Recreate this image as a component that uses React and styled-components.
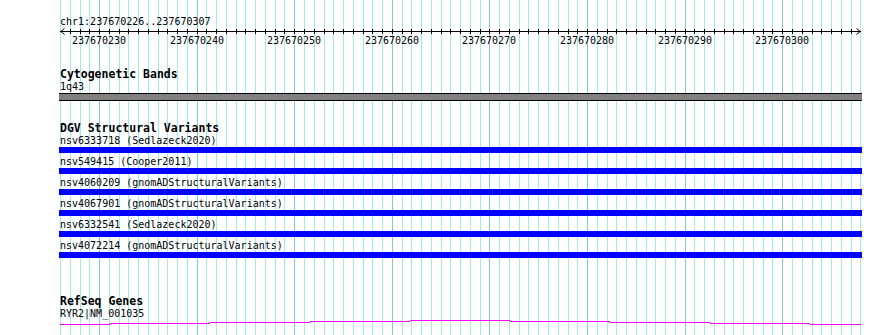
import React from 'react';
import styled, { createGlobalStyle } from 'styled-components';

const START = 237670226;
const END = 237670307;
const LEFT = 60;
const BP = 9.76;
const BASES = END - START + 1;

const xAt = (k) => Math.round(LEFT + k * BP);

const variants = [
  'nsv6333718 (Sedlazeck2020)',
  'nsv549415 (Cooper2011)',
  'nsv4060209 (gnomADStructuralVariants)',
  'nsv4067901 (gnomADStructuralVariants)',
  'nsv6332541 (Sedlazeck2020)',
  'nsv4072214 (gnomADStructuralVariants)',
];

// gene line segments: [x1, x2, y] (y relative to the gene svg)
const geneSegments = [
  [60, 110, 4],
  [110, 210, 3],
  [210, 310, 2],
  [310, 410, 1],
  [410, 510, 0],
  [510, 610, 1],
  [610, 710, 2],
  [710, 810, 3],
  [810, 861, 4],
];

const GlobalStyle = createGlobalStyle`
  body {
    margin: 0;
    background: #ffffff;
  }
`;

const Page = styled.div`
  position: relative;
  width: 890px;
  height: 335px;
  overflow: hidden;
  background: #ffffff;
  color: #000000;
  font-family: "DejaVu Sans Mono", monospace;
`;

const GridLayer = styled.svg`
  position: absolute;
  top: 0;
  left: 0;
  z-index: 0;
`;

const Content = styled.div`
  position: relative;
  z-index: 1;
  display: flex;
  flex-direction: column;
`;

const ChrLabel = styled.div`
  padding-top: 16px;
  margin-left: ${LEFT}px;
  font-size: 10px;
  line-height: 12px;
  height: 12px;
  white-space: pre;
`;

const Drawing = styled.svg`
  display: block;
  flex: none;
`;

const Track = styled.section`
  display: flex;
  flex-direction: column;
  margin-top: ${(p) => p.$top}px;
`;

const TrackTitle = styled.div`
  margin-left: ${LEFT}px;
  font-size: 11.5px;
  font-weight: bold;
  line-height: 14px;
  height: 14px;
  white-space: pre;
`;

const FeatureLabel = styled.div`
  margin-left: ${LEFT}px;
  font-size: 10px;
  line-height: 12px;
  height: 12px;
  white-space: pre;
`;

const BandBar = styled.div`
  margin-left: ${LEFT - 1}px;
  width: 803px;
  height: 6px;
  background: #808080;
  border-top: 1px solid #000000;
  border-bottom: 1px solid #000000;
`;

const VariantList = styled.div`
  display: flex;
  flex-direction: column;
  gap: 3px;
`;

const VariantRow = styled.div`
  display: flex;
  flex-direction: column;
`;

const VariantBar = styled.div`
  margin-left: ${LEFT - 1}px;
  width: 803px;
  height: 6px;
  background: #0000ff;
`;

const Grid = () => {
  const lines = [];
  for (let k = 0; k <= BASES; k++) {
    const major = (START + k) % 10 === 0;
    lines.push(
      <line
        key={k}
        x1={xAt(k) + 0.5}
        x2={xAt(k) + 0.5}
        y1={0}
        y2={335}
        stroke={major ? '#86c6ea' : '#a6e8ef'}
        strokeWidth={1}
      />
    );
  }
  return (
    <GridLayer width="890" height="335" shapeRendering="crispEdges">
      {lines}
    </GridLayer>
  );
};

const Ruler = () => {
  const right = xAt(BASES);
  const ticks = [];
  const labels = [];
  for (let k = 1; k < BASES; k++) {
    const x = xAt(k) + 0.5;
    ticks.push(<line key={k} x1={x} x2={x} y1={1} y2={6} stroke="#000" />);
    if ((START + k) % 10 === 0) {
      labels.push(
        <text
          key={k}
          x={xAt(k)}
          y={16}
          textAnchor="middle"
          fontFamily='"DejaVu Sans Mono", monospace'
          fontSize="10"
          fill="#000"
        >
          {START + k}
        </text>
      );
    }
  }
  return (
    <>
      <ChrLabel>chr1:{START}..{END}</ChrLabel>
      <Drawing width="890" height="22">
        <g shapeRendering="crispEdges">
          <line x1={LEFT} x2={right + 1} y1={3.5} y2={3.5} stroke="#000" />
          {ticks}
        </g>
        <polyline
          points={`${LEFT + 4.5},0.5 ${LEFT + 0.8},3.5 ${LEFT + 4.5},6.5`}
          fill="none"
          stroke="#000"
        />
        <polyline
          points={`${right - 3.5},0.5 ${right + 0.2},3.5 ${right - 3.5},6.5`}
          fill="none"
          stroke="#000"
        />
        {labels}
      </Drawing>
    </>
  );
};

const App = () => {
  return (
    <Page>
      <GlobalStyle />
      <Grid />
      <Content>
        <Ruler />

        <Track $top={17}>
          <TrackTitle>Cytogenetic Bands</TrackTitle>
          <FeatureLabel>1q43</FeatureLabel>
          <BandBar />
        </Track>

        <Track $top={20}>
          <TrackTitle>DGV Structural Variants</TrackTitle>
          <VariantList>
            {variants.map((v) => (
              <VariantRow key={v}>
                <FeatureLabel>{v}</FeatureLabel>
                <VariantBar />
              </VariantRow>
            ))}
          </VariantList>
        </Track>

        <Track $top={36}>
          <TrackTitle>RefSeq Genes</TrackTitle>
          <FeatureLabel>RYR2|NM_001035</FeatureLabel>
          <Drawing width="890" height="15" shapeRendering="crispEdges">
            {geneSegments.map(([x1, x2, y]) => (
              <line
                key={x1}
                x1={x1}
                x2={x2}
                y1={y + 0.5}
                y2={y + 0.5}
                stroke="#ff00ff"
              />
            ))}
          </Drawing>
        </Track>
      </Content>
    </Page>
  );
};

export default App;
